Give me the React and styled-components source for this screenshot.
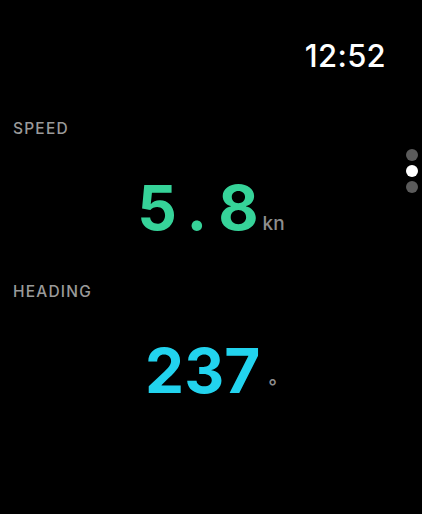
import React from "react";
import styled, { createGlobalStyle } from "styled-components";

const Global = createGlobalStyle`
  html, body { margin: 0; padding: 0; background: #000; }
  body { font-family: Inter, "Noto Sans", sans-serif; -webkit-font-smoothing: antialiased; }
`;

const Screen = styled.div`
  position: relative;
  width: 422px;
  height: 514px;
  background: #000;
  display: flex;
  flex-direction: column;
  box-sizing: border-box;
  overflow: hidden;
`;

const StatusBar = styled.div`
  display: flex;
  justify-content: flex-end;
  padding: 38px 36px 0 0;
  height: 36px;
`;

const Time = styled.div`
  color: #fff;
  font-size: 31px;
  font-weight: 500;
  line-height: 36px;
  letter-spacing: 0.3px;
`;

const Metric = styled.section`
  display: flex;
  flex-direction: column;
  margin-top: ${(p) => p.$top}px;
`;

const Label = styled.div`
  color: #9a9a9a;
  font-size: 15.5px;
  font-weight: 500;
  letter-spacing: 1.2px;
  line-height: 18px;
  padding-left: 13px;
`;

const ValueRow = styled.div`
  display: flex;
  justify-content: center;
  align-items: baseline;
  gap: ${(p) => p.$gap}px;
  margin-top: ${(p) => p.$top}px;
`;

const Value = styled.span`
  color: ${(p) => p.$color};
  font-size: 62px;
  font-weight: 650;
  line-height: 62px;
  letter-spacing: ${(p) => p.$spacing || 0}px;
`;

const Tail = styled.span`
  letter-spacing: 0;
`;

const Unit = styled.span`
  color: #8e8e8e;
  font-size: 19px;
  font-weight: 500;
  line-height: 19px;
`;

const Pager = styled.div`
  position: absolute;
  right: 4px;
  top: 149px;
  display: flex;
  flex-direction: column;
  gap: 4px;
`;

const Dot = styled.span`
  width: 12px;
  height: 12px;
  border-radius: 50%;
  background: ${(p) => (p.$active ? "#fff" : "#5b5b5b")};
`;

export default function App() {
  return (
    <Screen>
      <Global />
      <StatusBar>
        <Time>12:52</Time>
      </StatusBar>
      <Metric $top={46}>
        <Label>SPEED</Label>
        <ValueRow $top={39} $gap={4}>
          <Value $color="#36d399" $spacing={11}>
            5.<Tail>8</Tail>
          </Value>
          <Unit>kn</Unit>
        </ValueRow>
      </Metric>
      <Metric $top={44}>
        <Label>HEADING</Label>
        <ValueRow $top={39} $gap={8}>
          <Value $color="#22d3ee">237</Value>
          <Unit>°</Unit>
        </ValueRow>
      </Metric>
      <Pager>
        <Dot />
        <Dot $active />
        <Dot />
      </Pager>
    </Screen>
  );
}
